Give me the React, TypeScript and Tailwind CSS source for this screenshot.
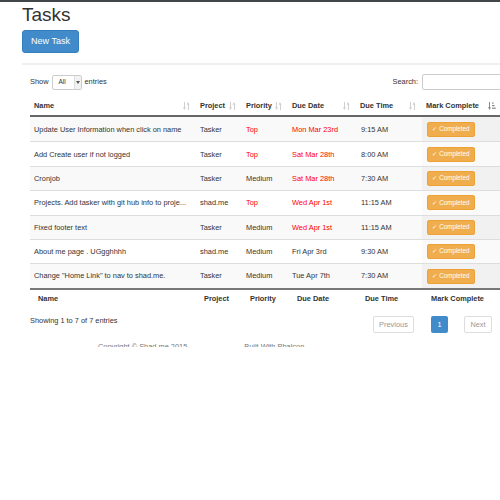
import React from 'react';

type Task = {
    name: string;
    project: string;
    priority: string;
    top: boolean;
    date: string;
    late: boolean;
    time: string;
};

const tasks: Task[] = [
    { name: 'Update User Information when click on name', project: 'Tasker', priority: 'Top', top: true, date: 'Mon Mar 23rd', late: true, time: '9:15 AM' },
    { name: 'Add Create user if not logged', project: 'Tasker', priority: 'Top', top: true, date: 'Sat Mar 28th', late: true, time: '8:00 AM' },
    { name: 'Cronjob', project: 'Tasker', priority: 'Medium', top: false, date: 'Sat Mar 28th', late: true, time: '7:30 AM' },
    { name: 'Projects. Add tasker with git hub info to proje...', project: 'shad.me', priority: 'Top', top: true, date: 'Wed Apr 1st', late: true, time: '11:15 AM' },
    { name: 'Fixed footer text', project: 'Tasker', priority: 'Medium', top: false, date: 'Wed Apr 1st', late: true, time: '11:15 AM' },
    { name: 'About me page . UGgghhhh', project: 'shad.me', priority: 'Medium', top: false, date: 'Fri Apr 3rd', late: false, time: '9:30 AM' },
    { name: 'Change "Home Link" to nav to shad.me.', project: 'Tasker', priority: 'Medium', top: false, date: 'Tue Apr 7th', late: false, time: '7:30 AM' },
];

const cols = 'grid grid-cols-[166px_46px_46px_68px_66px_80px]';

// glyphicon-sort, the faded one on unsorted columns
function SortIcon() {
    return (
        <svg width="7" height="8" viewBox="0 0 7 8" className="shrink-0 fill-[#d0d0d0]">
            <rect x="1" y="0" width="1" height="6" />
            <polygon points="0,5.3 3,5.3 1.5,8" />
            <rect x="5" y="2" width="1" height="6" />
            <polygon points="3.5,2.7 6.5,2.7 5,0" />
        </svg>
    );
}

// sorted column gets the darker attributes glyph
function SortedIcon() {
    return (
        <svg width="8" height="8" viewBox="0 0 8 8" className="shrink-0 fill-[#888]">
            <rect x="1" y="0" width="1" height="6" />
            <polygon points="0,5.3 3,5.3 1.5,8" />
            <rect x="4" y="0.5" width="1.6" height="1.2" />
            <rect x="4" y="3" width="2.6" height="1.2" />
            <rect x="4" y="5.6" width="3.8" height="1.2" />
        </svg>
    );
}

function HeadCell({ label, sorted }: { label: string; sorted?: boolean }) {
    return (
        <div className="flex items-center justify-between pl-[4px] pr-[6px]">
            <span>{label}</span>
            {sorted ? <SortedIcon /> : <SortIcon />}
        </div>
    );
}

export default function App() {
    return (
        <div
            className="w-[500px] h-[500px] overflow-hidden bg-white text-[#333]"
            style={{ fontFamily: '"Liberation Sans", Arial, sans-serif' }}
        >
            <div className="h-[2px] bg-[#41464b]" />

            <div className="h-[345px] overflow-hidden">
                <div className="w-[540px] pl-[22px]">
                    <h1 className="mt-[3px] text-[19px] leading-[19px] font-medium">Tasks</h1>

                    <button className="mt-[6px] h-[23px] w-[57px] rounded-[3px] bg-[#428bca] border border-[#357ebd] text-white text-[9px] leading-none">
                        New Task
                    </button>

                    <div className="mt-[10px] h-[2px] bg-[#f0f0f0]" />

                    <div className="ml-[8px] w-[472px]">
                        {/* length + search controls */}
                        <div className="mt-[9px] flex items-center justify-between text-[7.4px]">
                            <div className="flex items-center gap-[3px]">
                                <span>Show</span>
                                <div className="flex h-[15px] w-[30px] items-center rounded-[2px] border border-[#ccc] bg-white">
                                    <span className="flex-1 pl-[6px] text-[6.5px]">All</span>
                                    <div className="flex h-full w-[7px] items-center justify-center border-l border-[#ddd] bg-[#f2f2f2]">
                                        <svg width="4" height="3" viewBox="0 0 4 3" className="fill-[#555]">
                                            <polygon points="0,0 4,0 2,3" />
                                        </svg>
                                    </div>
                                </div>
                                <span>entries</span>
                            </div>
                            <div className="flex items-center gap-[4px]">
                                <span>Search:</span>
                                <div className="h-[16px] w-[80px] rounded-[2px] border border-[#ccc] bg-white" />
                            </div>
                        </div>

                        {/* table */}
                        <div className="mt-[6px] text-[7.4px]">
                            <div className={`${cols} h-[21px] border-b-2 border-[#666] font-bold`}>
                                <HeadCell label="Name" />
                                <HeadCell label="Project" />
                                <HeadCell label="Priority" />
                                <HeadCell label="Due Date" />
                                <HeadCell label="Due Time" />
                                <HeadCell label="Mark Complete" sorted />
                            </div>

                            {tasks.map((t, i) => {
                                const odd = i % 2 === 0;
                                return (
                                    <div
                                        key={i}
                                        className={`${cols} h-[24.4px] ${i > 0 ? 'border-t border-[#ddd]' : ''} ${odd ? 'bg-[#f9f9f9]' : 'bg-white'}`}
                                    >
                                        <div className="flex items-center pl-[4px] whitespace-nowrap">{t.name}</div>
                                        <div className="flex items-center pl-[4px]">{t.project}</div>
                                        <div className={`flex items-center pl-[4px] ${t.top ? 'text-[#f00]' : ''}`}>{t.priority}</div>
                                        <div className={`flex items-center pl-[4px] ${t.late ? 'text-[#f00]' : ''}`}>{t.date}</div>
                                        <div className="flex items-center pl-[5px]">{t.time}</div>
                                        <div className={`flex items-center pl-[5px] ${odd ? 'bg-[#f1f1f1]' : 'bg-[#fafafa]'}`}>
                                            <button className="h-[15px] w-[48px] rounded-[2px] border border-[#eea236] bg-[#f0ad4e] text-white text-[6.3px] leading-none">
                                                ✓ Completed
                                            </button>
                                        </div>
                                    </div>
                                );
                            })}

                            <div className={`${cols} h-[20px] border-t-2 border-[#777] font-bold`}>
                                <div className="flex items-center pl-[8px]">Name</div>
                                <div className="flex items-center pl-[8px]">Project</div>
                                <div className="flex items-center pl-[8px]">Priority</div>
                                <div className="flex items-center pl-[9px]">Due Date</div>
                                <div className="flex items-center pl-[9px]">Due Time</div>
                                <div className="flex items-center pl-[9px]">Mark Complete</div>
                            </div>
                        </div>

                        {/* info + pagination */}
                        <div className="mt-[8px] flex items-start justify-between pr-[10px] text-[7.4px]">
                            <span className="leading-[9px]">Showing 1 to 7 of 7 entries</span>
                            <div className="flex items-center">
                                <span className="flex h-[17px] w-[41px] items-center justify-center rounded-[2px] border border-[#ddd] text-[#999]">
                                    Previous
                                </span>
                                <span className="ml-[17px] flex h-[17px] w-[17px] items-center justify-center rounded-[2px] bg-[#428bca] text-white">
                                    1
                                </span>
                                <span className="ml-[16px] flex h-[17px] w-[28px] items-center justify-center rounded-[2px] border border-[#ddd] text-[#999]">
                                    Next
                                </span>
                            </div>
                        </div>
                    </div>

                    <div className="mt-[9px] flex gap-[57px] pl-[76px] text-[7.4px] leading-[9px] text-[#777]">
                        <span>Copyright © Shad.me 2015</span>
                        <span>Built With Phalcon</span>
                    </div>
                </div>
            </div>
        </div>
    );
}
